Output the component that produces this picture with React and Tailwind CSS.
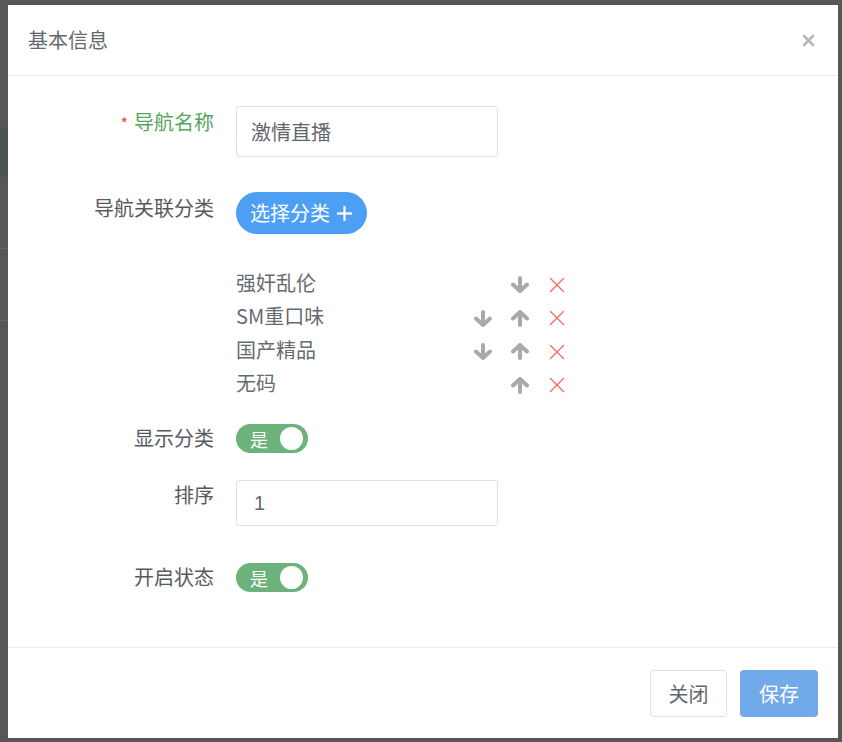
import React from 'react';

const ArrowDown = () => (
    <svg width="20" height="17" viewBox="0 0 20 17" fill="none" stroke="#a9a9a9" strokeWidth="4" strokeLinecap="round" strokeLinejoin="round">
        <path d="M10 2 L10 14" />
        <path d="M3 8.5 L10 15 L17 8.5" />
    </svg>
);

const ArrowUp = () => (
    <svg width="20" height="17" viewBox="0 0 20 17" fill="none" stroke="#a9a9a9" strokeWidth="4" strokeLinecap="round" strokeLinejoin="round">
        <path d="M10 15 L10 3" />
        <path d="M3 8.5 L10 2 L17 8.5" />
    </svg>
);

const Cross = () => (
    <svg width="16" height="16" viewBox="0 0 16 16" fill="none" stroke="#f26a6a" strokeWidth="1.4" strokeLinecap="round">
        <path d="M1.5 1.5 L14.5 14.5" />
        <path d="M14.5 1.5 L1.5 14.5" />
    </svg>
);

const categories = [
    { name: '强奸乱伦', down: true, up: false },
    { name: 'SM重口味', down: true, up: true },
    { name: '国产精品', down: true, up: true },
    { name: '无码', down: false, up: true },
];

const Label = ({ children, className = '', color = 'text-[#565b62]' }) => (
    <div className={`w-[206px] shrink-0 text-right text-[20px] leading-[24px] ${color} ${className}`}>{children}</div>
);

const Switch = () => (
    <div className="w-[72px] h-[29px] rounded-full bg-[#6cb27a] flex items-center justify-between pl-[14px] pr-[5px]">
        <span className="text-white text-[18px] leading-none">是</span>
        <span className="w-[23px] h-[23px] rounded-full bg-white" />
    </div>
);

export default function App() {
    return (
        <div className="w-[842px] h-[742px] bg-[#575757] flex font-['Noto_Sans_CJK_SC',sans-serif]">
            {/* backdrop strip */}
            <div className="w-[8px] shrink-0 flex flex-col">
                <div className="h-[127px]" />
                <div className="h-[50px] bg-[#4c5456]" />
                <div className="h-[71px]" />
                <div className="h-px bg-[#666]" />
                <div className="h-[71px]" />
                <div className="h-px bg-[#666]" />
            </div>

            <div className="mt-[5px] w-[830px] h-[733px] bg-white flex flex-col">
                <div className="h-[71px] border-b border-[#ededed] flex items-center justify-between pl-[20px] pr-[23px]">
                    <span className="text-[20px] text-[#646970]">基本信息</span>
                    <svg width="13" height="13" viewBox="0 0 13 13" fill="none" stroke="#b8b8b8" strokeWidth="2.6" strokeLinecap="round">
                        <path d="M2 2 L11 11" />
                        <path d="M11 2 L2 11" />
                    </svg>
                </div>

                <div className="flex-1 pt-[30px] flex flex-col">
                    <div className="flex">
                        <Label className="pt-[4px]" color="text-[#57a65f]">
                            <span className="text-[#e8483d] text-[16px] mr-[6px]">*</span>导航名称
                        </Label>
                        <div className="ml-[22px] w-[262px] h-[51px] border border-[#dcdfe6] rounded-[3px] flex items-center px-[14px] text-[20px] text-[#62666d]">
                            激情直播
                        </div>
                    </div>

                    <div className="flex mt-[35px]">
                        <Label className="pt-[4px]">导航关联分类</Label>
                        <div className="ml-[22px] h-[42px] rounded-full bg-[#4c9ff3] flex items-center pl-[14px] pr-[14px] text-white text-[20px]">
                            选择分类
                            <svg className="ml-[6px]" width="17" height="17" viewBox="0 0 17 17" stroke="white" strokeWidth="2.2">
                                <path d="M8.5 1 L8.5 16" />
                                <path d="M1 8.5 L16 8.5" />
                            </svg>
                        </div>
                    </div>

                    <div className="flex mt-[32px]">
                        <div className="w-[206px] shrink-0" />
                        <div className="ml-[22px] w-[331px] flex flex-col">
                            {categories.map(c => (
                                <div key={c.name} className="h-[33.5px] flex items-center justify-between">
                                    <span className="text-[20px] text-[#666b72]">{c.name}</span>
                                    <div className="flex items-center gap-[17px] pt-[4px]">
                                        {c.down && <ArrowDown />}
                                        {c.up && <ArrowUp />}
                                        <div className="w-[20px] flex justify-center"><Cross /></div>
                                    </div>
                                </div>
                            ))}
                        </div>
                    </div>

                    <div className="flex mt-[24px]">
                        <Label className="pt-[2px]">显示分类</Label>
                        <div className="ml-[22px]"><Switch /></div>
                    </div>

                    <div className="flex mt-[27px]">
                        <Label className="pt-[3px]">排序</Label>
                        <div className="ml-[22px] w-[262px] h-[46px] border border-[#dcdfe6] rounded-[3px] flex items-center px-[17px] text-[20px] text-[#62666d] font-['Liberation_Sans',sans-serif]">
                            1
                        </div>
                    </div>

                    <div className="flex mt-[37px]">
                        <Label className="pt-[2px]">开启状态</Label>
                        <div className="ml-[22px]"><Switch /></div>
                    </div>
                </div>

                <div className="h-[91px] border-t border-[#ededed] flex justify-end items-start pt-[22px] pr-[20px] gap-[13px]">
                    <button className="w-[77px] h-[47px] border border-[#dcdfe6] rounded-[4px] bg-white text-[20px] text-[#62666d]">关闭</button>
                    <button className="w-[78px] h-[47px] rounded-[4px] bg-[#72a9e9] text-[20px] text-white">保存</button>
                </div>
            </div>
        </div>
    );
}
